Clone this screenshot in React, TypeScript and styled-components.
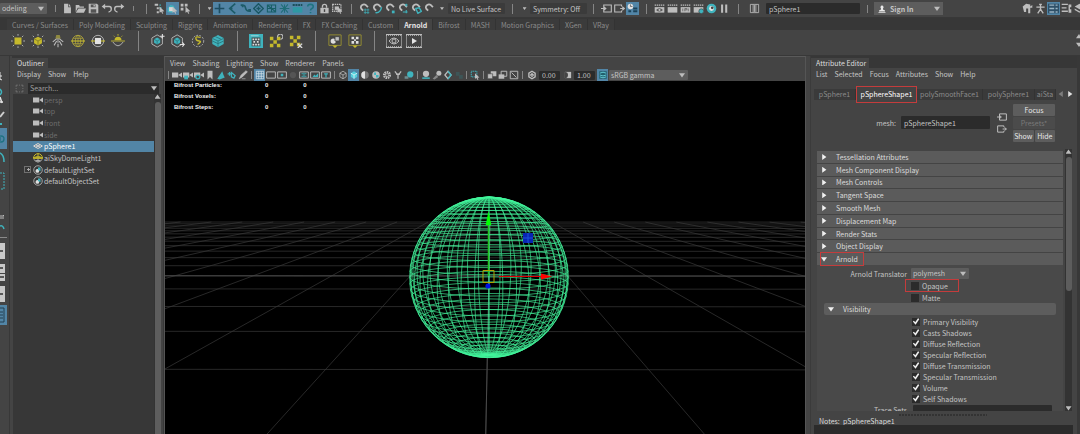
import React from 'react';
import styled, { createGlobalStyle, css } from 'styled-components';

const C = {
  base: '#444444',
  dark: '#373737',
  field: '#2b2b2b',
  control: '#5d5d5d',
  text: '#c4c4c4',
  dim: '#8b8b8b',
  blue: '#5285a6',
  teal: '#3fb3bd',
  yellow: '#c5b92c',
  grey: '#bdbdbd',
  red: '#c43c3c',
  mesh: '#43f59c',
};

const GlobalStyle = createGlobalStyle`
  *, *::before, *::after { box-sizing: border-box; }
  body { margin: 0; background: ${C.base}; }
  body, button, input, select, textarea {
    font-family: "Noto Sans CJK SC", "Noto Sans", sans-serif;
    font-size: 7px;
    line-height: 10px;
    color: ${C.text};
  }
  button, input, select, textarea { margin: 0; padding: 0; border: 0; border-radius: 0; background: none; }
  button { white-space: nowrap; }
`;

/* ---------- icons ---------- */

const magnet = (
  <path d="M3 8 A4.5 4.5 0 0 1 10 3 L13 6 M3 8 L6 11" fill="none" stroke={C.grey} strokeWidth="2.6" />
);
const clap = (
  <>
    <path d="M1 3h14M1 3" stroke={C.grey} strokeWidth="2" strokeDasharray="2 1" />
    <path d="M1 6h14v8H1z" fill={C.grey} />
  </>
);
const camera = <path d="M0 4h10v8H0zM10 8l6-4v8z" fill={C.grey} />;
const rays = (
  <path
    d="M8 0v2M8 14v2M0 8h2M14 8h2M2 2l1.500 1.500M12.500 12.500L14 14M14 2l-1.500 1.500M3.500 12.500L2 14"
    stroke={C.grey}
    strokeWidth="1"
  />
);
const cube = (fill: string, line: string) => (
  <>
    <path d="M8 2l5 3v6l-5 3-5-3V5z" fill={fill} />
    <path d="M3 5l5 3 5-3M8 8v6" fill="none" stroke={line} strokeWidth="1.200" />
  </>
);
const hexCube = (
  <>
    <path d="M7 1l6 3.500v7L7 15l-6-3.500v-7z" fill="none" stroke={C.grey} strokeWidth="1" />
    <path d="M7 4l3.500 2v4L7 12l-3.500-2V6z" fill={C.teal} />
    <path d="M3.500 6L7 8l3.500-2M7 8v4" fill="none" stroke="#2d6b70" strokeWidth="0.800" />
  </>
);
const frame = <path d="M1 3h14v10H1z" fill="none" stroke={C.grey} strokeWidth="1.500" />;
const checker = (color: string) => (
  <path d="M1 1h4v4H1zM9 1h4v4H9zM5 5h4v4H5zM1 9h4v4H1zM9 9h4v4H9z" fill={color} />
);
const pointer = <path d="M8 5l7 7-3 .300 1.500 3-1.500.500-1.500-3L8 14z" fill={C.grey} />;
const yellowFrame = (
  <>
    <path d="M1 1h14v12H1z" fill="none" stroke="#9c9431" strokeWidth="1" />
    <path d="M5 13h6l-3 3z" fill={C.yellow} />
  </>
);
const setIcon = (
  <>
    <circle cx="8" cy="8" r="6.800" fill="none" stroke={C.grey} strokeWidth="1.300" />
    <circle cx="7" cy="9.500" r="3" fill="#e0e0e0" />
    <path d="M8 4h4v6l-4-2z" fill={C.teal} />
  </>
);

const ICONS = {
  file: <path d="M3 1h6v5h4v9H3zM10 1l3 4h-3z" fill={C.grey} />,
  folder: <path d="M1 3h5l1 2h6v2H4l-3 6zM5 8h11l-3 6H1z" fill={C.grey} />,
  save: (
    <>
      <path d="M1 1h12l2 2v12H1z" fill={C.grey} />
      <path d="M4 2h7v4H4zM4 9h8v5H4z" fill="#555" />
      <path d="M8 3h2v2H8z" fill={C.grey} />
    </>
  ),
  undo: <path d="M6 1L1 5l5 4V6h6q2 0 2 3t-3 3v2q5-1 5-5.500T12 4H6z" fill={C.grey} />,
  redo: <path d="M10 1l5 4-5 4V6H4q-2 0-2 3t3 3v2q-5-1-5-5.500T4 4h6z" fill={C.grey} />,
  selHier: (
    <>
      <path d="M1 1h5v3H1zM4 6h3v3H4zM4 12h3v3H4z" fill={C.grey} />
      <path d="M8 3h2M8 7h3" stroke={C.teal} strokeWidth="2" />
      {pointer}
    </>
  ),
  selObj: (
    <>
      <path d="M1 8l4-5 5 1 2 6-5 4-6-1z" fill={C.teal} />
      <path d="M3 6h6v6H3z" fill="#d7d7d7" />
      {pointer}
    </>
  ),
  selComp: (
    <>
      <path d="M1 1h4v4H1zM7 1h4v4H7zM1 7h4v4H1z" fill={C.grey} />
      {pointer}
    </>
  ),
  plus: <path d="M8 1v14M1 8h14" stroke="#1d4d61" strokeWidth="2.400" />,
  snapCurve: <path d="M12 1L4 8l8 7M3 8h5" fill="none" stroke="#1d5b68" strokeWidth="2.400" />,
  snapLine: <path d="M2 4q5-2 6 3t6 5M1 3h3v3M12 10h3v3" fill="none" stroke="#1d5b68" strokeWidth="2.400" />,
  diamond: (
    <path d="M8 1l7 7-7 7-7-7zM5 8h6M8 5v6" fill="none" stroke="#1a5763" strokeWidth="2" />
  ),
  gridSnap: (
    <path d="M2 3h12v10H2zM2 8h12M8 3v10M3 4l10 8" fill="none" stroke="#175f66" strokeWidth="1.500" />
  ),
  burst: <path d="M3 2l10 12M13 2L3 14M1 8h14M8 2v12" stroke="#1f6d78" strokeWidth="1.500" />,
  slate: (
    <>
      <path d="M1 6h14v8H1z" fill="#2f98a4" />
      <path d="M1 3h14" stroke="#1b4f5b" strokeWidth="3" strokeDasharray="3 1" />
    </>
  ),
  help: (
    <path d="M4 5q0-3 4-3t4 3q0 2-2 3t-2 3M8 13v2" fill="none" stroke="#1f7480" strokeWidth="2.400" />
  ),
  lock: (
    <>
      <path d="M2 7h12v8H2z" fill={C.grey} />
      <path d="M5 7V5q0-3 3-3t3 3v2" fill="none" stroke={C.grey} strokeWidth="2" />
      <path d="M7 9h2v4H7z" fill="#444" />
    </>
  ),
  marquee: (
    <>
      <path d="M1 2h12v10H1z" fill="none" stroke={C.grey} strokeWidth="2" strokeDasharray="2 1" />
      <path d="M4 5h6v5H4z" fill={C.grey} />
      {pointer}
    </>
  ),
  magGrid: <>{magnet}<path d="M9 8v8M13 8v8M7 10h8M7 14h8" stroke={C.teal} /></>,
  magCurve: <>{magnet}<path d="M5 14q7 1 9-8" fill="none" stroke={C.teal} strokeWidth="2" /></>,
  magPoint: <>{magnet}<path d="M10 11h4v4h-4z" fill={C.teal} /></>,
  magCenter: <>{magnet}<path d="M12 1v4M10 3h4M7 13h7M12 10v5" stroke={C.teal} strokeWidth="1.600" /></>,
  magPlane: <>{magnet}<path d="M7 8l5-1 3 5-5 3z" fill="none" stroke={C.teal} strokeWidth="2" /></>,
  magnet,
  inBox: <path d="M4 3h11v10H4zM0 8h6M4 5.500L7 8l-3 2.500" fill="none" stroke={C.grey} strokeWidth="1.600" />,
  outBox: <path d="M11 5V3H1v10h10v-2M9 8h6M12 5.500L15 8l-3 2.500" fill="none" stroke={C.grey} strokeWidth="1.600" />,
  history: (
    <>
      <circle cx="5" cy="5" r="4" fill="#e2e2e2" />
      <path d="M5 2v3h3" fill="none" stroke="#444" />
      <path d="M9 8h6M9 12h6M2 12h4" stroke="#1b4258" strokeWidth="3" />
    </>
  ),
  renderEye: <>{clap}<path d="M3 10q5-5 10 0-5 5-10 0" fill="#555" /><circle cx="8" cy="10" r="1.500" fill={C.grey} /></>,
  render: clap,
  renderIpr: <>{clap}<path d="M4 8v4M7 8v4M7 8h3v2H7M12 8v4" stroke="#555" fill="none" /></>,
  renderSet: <>{clap}<circle cx="12" cy="12" r="3.500" fill={C.teal} stroke="#444" /></>,
  hyper: (
    <>
      <circle cx="8" cy="8" r="7" fill={C.teal} />
      <circle cx="8" cy="8" r="3.500" fill="#e6e6e6" />
      <circle cx="9" cy="7" r="2" fill="#444" />
    </>
  ),
  pause: <path d="M3 2h3v12H3zM9 2h3v12H9z" fill={C.grey} />,
  textField: <path d="M2 2h4v12H2zM10 2h4v12h-4zM6 2h4M6 14h4M8 3v10" fill="none" stroke={C.grey} strokeWidth="1.200" />,
  user: (
    <>
      <path d="M8 1a3.500 3.500 0 0 1 2 6v2l4 2v2H2v-2l4-2V7a3.500 3.500 0 0 1 2-6" fill="#e8e8e8" />
      <path d="M1 15h14" stroke="#e8e8e8" strokeWidth="1.500" />
    </>
  ),
  toolA: <path d="M1 5l5-4 6 1v3l3-2v4h-3v8H9V8H6v5H3z" fill={C.grey} />,
  person: <path d="M8 1v4M2 6h12M8 5v5M8 9l-4 6M8 9l4 6M6 2h4" fill="none" stroke={C.grey} strokeWidth="2" />,
  panelA: (
    <>
      <path d="M0 1h16v14H0z" fill="#2e5068" />
      <path d="M2 3h7M11 3h3M2 8h7M11 8h3M2 13h7M11 13h3" stroke="#9ab4c4" strokeWidth="2" />
    </>
  ),
  panelB: <path d="M1 2h9M12 2v12M1 7h7M1 12h9M14 2v4M14 9v5" stroke={C.grey} strokeWidth="2" />,
  layers: <path d="M8 1l7 4-7 4-7-4zM1 8l7 4 7-4v2l-7 4-7-4z" fill={C.grey} />,

  areaLight: <>{rays}<path d="M4 4h8v8H4z" fill={C.yellow} /></>,
  meshLight: <>{rays}<path d="M8 3l4.500 2.500v5L8 13l-4.500-2.500v-5z" fill={C.yellow} /><path d="M3.500 5.500L8 8l4.500-2.500M8 8v5" fill="none" stroke="#6f6a26" strokeWidth="0.800" /></>,
  photometric: (
    <>
      <path d="M8 4v6M7 5l-5 4M9 5l5 4M6.500 8l-3 5M9.500 8l3 5M8 11v4" fill="none" stroke={C.grey} strokeWidth="1.200" />
      <path d="M6 1h4l1 4H5z" fill="#8f8940" />
    </>
  ),
  skydome: (
    <>
      <circle cx="8" cy="8" r="6.500" fill="none" stroke="#b3a83a" />
      <ellipse cx="8" cy="8" rx="3" ry="6.500" fill="none" stroke="#b3a83a" strokeWidth="0.800" />
      <path d="M8 1.500v13M2.500 5h11M2.500 11h11" stroke="#b3a83a" strokeWidth="0.800" />
      <path d="M0 8h16" stroke={C.yellow} strokeWidth="1.300" />
    </>
  ),
  skydomeNode: (
    <>
      <path d="M1 8a7 7 0 0 1 14 0zM4 6h8M8 1v6" fill="none" stroke={C.yellow} strokeWidth="1.600" />
      <path d="M0 8h16" stroke={C.yellow} strokeWidth="2.500" />
      <path d="M1.500 10a7 7 0 0 0 13 0M4 12h8M8 9v6" fill="none" stroke={C.grey} strokeWidth="1.300" />
    </>
  ),
  portal: (
    <>
      <circle cx="8" cy="8" r="6.500" fill="none" stroke={C.grey} />
      <path d="M0 8h16" stroke={C.yellow} strokeWidth="1.300" />
      <path d="M4.500 4.500h7v7h-7z" fill="#e3e3e3" />
    </>
  ),
  physSky: (
    <>
      <path d="M4 7a4 4 0 0 1 8 0z" fill={C.yellow} />
      <path d="M0 8h16M8 0v2M3 2l1 1M13 2l-1 1" stroke={C.yellow} />
      <path d="M2 9q6 9 12 0" fill="none" stroke={C.grey} />
    </>
  ),
  standinNew: <>{hexCube}<path d="M13 0v5M10.500 2.500h5" stroke="#e4e4e4" strokeWidth="1.200" /></>,
  standinOut: <>{hexCube}<path d="M10 12h5l-2-2.500M15 12l-2 2.500" fill="none" stroke="#e4e4e4" strokeWidth="1.200" /></>,
  curveCollector: (
    <>
      <circle cx="8" cy="8" r="6.500" fill="none" stroke={C.grey} strokeDasharray="2 1.500" />
      <path d="M11 4q-6-2-5.500 1t4 3-2 4" fill="none" stroke={C.yellow} strokeWidth="1.500" />
    </>
  ),
  volume: (
    <>
      <path d="M8 1l6.500 3.500v7L8 15l-6.500-3.500v-7z" fill={C.teal} />
      <path d="M1.500 5L8 8l6.500-3M1.500 8L8 11l6.500-3M8 8v7M5 3l6.500 3" fill="none" stroke="#2b757c" />
    </>
  ),
  txWindow: (
    <>
      <path d="M0 0h16v16H0z" fill={C.teal} />
      <path d="M2 2h9" stroke="#a9d9de" />
      <path d="M3 4h10v10H3z" fill="#3e4a4c" />
      <path d="M4 5h2v2H4zM10 5h2v2h-2zM7 5h2v2H7zM5 8h2v2H5zM9 8h2v2H9zM4 11h2v2H4zM10 11h2v2h-2zM7 11h2v2H7z" fill="#ddd" />
    </>
  ),
  txUpdate: <g transform="translate(0 2)">{checker(C.yellow)}<path d="M10 2a3 3 0 1 1 3 2" fill="none" stroke={C.grey} strokeWidth="1.300" /></g>,
  txDelete: <g transform="translate(0 1)">{checker(C.yellow)}<path d="M10 10l5 5M15 10l-5 5" stroke="#d8d8d8" strokeWidth="1.600" /></g>,
  bakeGeo: <>{yellowFrame}<circle cx="6" cy="8" r="3" fill="#ddd" /><path d="M8 3h5v5H8z" fill={C.grey} stroke="#444" /></>,
  bakeTex: <>{yellowFrame}<path d="M4 3h3v3H4zM9 3h3v3H9zM7 6h2v2H7zM4 8h3v3H4zM9 8h3v3H9z" fill="#e0e0e0" /></>,
  renderView: (
    <>
      <path d="M0 1.500h16v13H0z" fill="none" stroke={C.grey} strokeWidth="1.200" />
      <path d="M0 2h16M0 14h16" stroke={C.grey} strokeWidth="1.500" strokeDasharray="1 1" />
      <path d="M3 8q5-6 10 0-5 6-10 0" fill="none" stroke={C.grey} />
      <circle cx="8" cy="8" r="2" fill="none" stroke={C.grey} />
    </>
  ),
  renderPlay: (
    <>
      <path d="M0 1.500h16v13H0z" fill="none" stroke={C.grey} strokeWidth="1.200" />
      <path d="M0 2h16M0 14h16" stroke={C.grey} strokeWidth="1.500" strokeDasharray="1 1" />
      <path d="M6 5l5 3-5 3z" fill="#e4e4e4" />
    </>
  ),

  camera,
  cameraLock: <>{camera}<path d="M2 9h6v6H2z" fill={C.teal} /></>,
  cameraSet: <>{camera}<circle cx="6" cy="11" r="3" fill="#444" stroke={C.teal} strokeWidth="2" /></>,
  bookmark: <path d="M4 1h8v14l-4-4-4 4z" fill={C.grey} />,
  imagePlane: <path d="M2 14l8-12 2 6 2 4-8 3z" fill={C.teal} />,
  panZoom: <path d="M1 6h6M4 3v6M7 4l6 5-2 4-4-2z" fill="none" stroke={C.teal} strokeWidth="2" />,
  pencil: <path d="M2 14l3-6 8-7 2 2-8 8zM6 14h6" fill={C.grey} stroke={C.grey} />,
  grid: <path d="M2 2h12v12H2zM2 6h12M2 10h12M6 2v12M10 2v12" fill="none" stroke="#d7e4ec" strokeWidth="1.200" />,
  frame,
  gate: <>{frame}<path d="M6 6h4v4H6z" fill={C.teal} /></>,
  dot: <circle cx="8" cy="8" r="5" fill="#555" />,
  safeA: <>{frame}<path d="M4 6h3M9 6h3M4 10h3M9 10h3M8 4v8" stroke={C.teal} strokeWidth="1.500" /></>,
  safeB: <>{frame}<path d="M4 11l3-4 2 2 4-4v6z" fill={C.teal} /></>,
  safeT: <>{frame}<path d="M5 6h6M8 6v6" stroke={C.teal} strokeWidth="2" /></>,
  wireCube: <path d="M8 2l5 3v6l-5 3-5-3V5zM3 5l5 3 5-3M8 8v6" fill="none" stroke={C.grey} strokeWidth="1.200" />,
  shadedCube: cube('#54d0dc', '#e8f6f8'),
  halfBall: <><circle cx="8" cy="8" r="6" fill="#777" /><path d="M8 2a6 6 0 0 0 0 12z" fill="#e0e0e0" /></>,
  texBall: <><circle cx="8" cy="8" r="6" fill={C.grey} /><path d="M5 4h3v4H5zM8 8h4v4H8z" fill={C.teal} /></>,
  checkBall: <circle cx="8" cy="8" r="4" fill="none" stroke={C.grey} strokeWidth="5" strokeDasharray="2 1" />,
  bulb: <path d="M8 5v9M3 2l3 4M13 2l-3 4M5 7h6" stroke={C.grey} strokeWidth="2" />,
  shadow: <><circle cx="10" cy="7" r="5" fill={C.teal} /><path d="M1 10h6v4H1z" fill="#6f8d90" /></>,
  ao: <><circle cx="8" cy="6" r="5" fill={C.grey} /><path d="M2 13h12" stroke={C.teal} strokeWidth="2.500" /></>,
  blurBall: <><circle cx="11" cy="5" r="4" fill={C.grey} /><path d="M1 14l6-6 3 3-6 4z" fill="#888" /></>,
  antialias: <><path d="M8 2l5 6-5 6-5-6z" fill="none" stroke={C.grey} strokeWidth="2" /><path d="M8 2l5 6-5 6" fill="none" stroke={C.teal} strokeWidth="2" /></>,
  dof: <path d="M3 3h6v6H3zM8 8h6v6H8z" fill="#3d5557" />,
  isolate: <><path d="M2 2h9v9H2z" fill="none" stroke={C.teal} strokeWidth="1.600" strokeDasharray="2 1" />{pointer}</>,
  xray: <><path d="M6 2h9v8H6z" fill={C.grey} /><path d="M1 6h8v8H1z" fill={C.grey} stroke="#444" /></>,
  xrayJoint: <><path d="M5 2h9v8H5z" fill="none" stroke={C.grey} strokeWidth="1.500" /><path d="M1 7h9v7H1z" fill={C.grey} /></>,
  xrayComp: <><path d="M2 2h12v12H2z" fill="none" stroke={C.grey} strokeWidth="1.500" /><path d="M4 4l8 8" stroke={C.grey} strokeWidth="1.500" /></>,
  aperture: <path d="M8 2l5 3v6l-5 3-5-3V5zM8 6l2 2-2 2-2-2z" fill="none" stroke={C.grey} strokeWidth="2.200" />,
  gamma: <><path d="M3 3h10v10H3z" fill={C.grey} /><path d="M3 3a5 5 0 0 1 0 10z" fill="#444" /></>,
  colorMgmt: <><path d="M2 2h12v12H2z" fill="#22606d" /><path d="M3 5q5-3 10 0M3 8q5 3 10 0M3 11q5 3 10 0" fill="none" stroke="#65cbd6" strokeWidth="1.500" /></>,
  polyMesh: <path d="M1 8l7-4 7 4-7 4zM4.500 6l7 4M11.500 6l-7 4" fill="none" stroke="#e0d6cf" strokeWidth="1.600" />,
  setIcon,
  target: <path d="M2 5V2h3M11 2h3v3M14 11v3h-3M5 14H2v-3M7 2h2M7 14h2M2 7v2M14 7v2" fill="none" stroke="#777" strokeWidth="1.500" />,
};
type IconName = keyof typeof ICONS;

const Glyph = styled.svg<{ $size: number }>`
  display: block;
  flex: none;
  width: ${(p) => p.$size}px;
  height: ${(p) => p.$size}px;
`;
const Icon = ({ name, size }: { name: IconName; size: number }) => (
  <Glyph $size={size} viewBox="0 0 16 16" aria-hidden="true">
    {ICONS[name]}
  </Glyph>
);

const Tri = styled.span<{ $dir: 'up' | 'down' | 'right' | 'left'; $color?: string }>`
  display: block;
  flex: none;
  width: 6px;
  height: 6px;
  background: ${(p) => p.$color || C.grey};
  pointer-events: none;
  clip-path: ${(p) =>
    ({
      up: 'polygon(0 80%, 50% 10%, 100% 80%)',
      down: 'polygon(0 20%, 100% 20%, 50% 90%)',
      right: 'polygon(20% 0, 90% 50%, 20% 100%)',
      left: 'polygon(80% 0, 10% 50%, 80% 100%)',
    })[p.$dir]};
`;

/* ---------- shared controls ---------- */

const ToolButton = styled.button<{ $w: number; $h: number; $on?: boolean }>`
  display: flex;
  flex: none;
  align-items: center;
  justify-content: center;
  width: ${(p) => p.$w}px;
  height: ${(p) => p.$h}px;
  ${(p) => p.$on && css`background: ${C.blue};`}
`;
const Rule = styled.span<{ $w: number; $h: number }>`
  display: flex;
  flex: none;
  justify-content: center;
  width: ${(p) => p.$w}px;
  &::before {
    content: '';
    width: 1px;
    height: ${(p) => p.$h}px;
    background: #858585;
  }
`;
const ArrowSlot = styled.span<{ $w: number }>`
  display: flex;
  flex: none;
  justify-content: center;
  width: ${(p) => p.$w}px;
  ${Tri} { width: 4px; height: 4px; }
`;
const Gap = styled.span<{ $w: number }>`
  flex: none;
  width: ${(p) => p.$w}px;
`;
const SelectWrap = styled.span<{ $w: number; $h: number }>`
  position: relative;
  flex: none;
  display: block;
  width: ${(p) => p.$w}px;
  height: ${(p) => p.$h}px;
  select {
    appearance: none;
    display: block;
    width: 100%;
    height: 100%;
    padding: 0 14px 0 2px;
    background: ${C.control};
    border-radius: 1px;
    line-height: ${(p) => p.$h}px;
  }
  ${Tri} {
    position: absolute;
    right: 3px;
    top: 50%;
    margin-top: -3px;
  }
`;
const Field = styled.input<{ $w: number; $h: number }>`
  flex: none;
  width: ${(p) => p.$w}px;
  height: ${(p) => p.$h}px;
  padding: 0 3px;
  background: ${C.field};
  border-radius: 1px;
`;

const Select = ({ label, value, w, h }: { label: string; value: string; w: number; h: number }) => (
  <SelectWrap $w={w} $h={h}>
    <select aria-label={label} defaultValue={value}>
      <option>{value}</option>
    </select>
    <Tri $dir="down" />
  </SelectWrap>
);

type Tool = IconName | [IconName];
const Tools = ({ items, w, h, size }: { items: Tool[]; w: number; h: number; size: number }) => (
  <>
    {items.map((item) => {
      const on = Array.isArray(item);
      const name = Array.isArray(item) ? item[0] : item;
      return (
        <ToolButton key={name} $w={w} $h={h} $on={on} aria-label={name}>
          <Icon name={name} size={size} />
        </ToolButton>
      );
    })}
  </>
);

/* ---------- status line ---------- */

const StatusBar = styled.header`
  display: flex;
  flex: none;
  align-items: center;
  height: 18px;
  overflow: hidden;
  background: ${C.base};
  border-bottom: 1px solid #383838;
`;
const StatusField = styled.button`
  flex: none;
  width: 57px;
  height: 11px;
  padding: 0 3px;
  background: #3b3b3b;
  border-radius: 1px;
  text-align: left;
`;
const SignIn = styled.button`
  display: flex;
  flex: none;
  align-items: center;
  gap: 4px;
  width: 69px;
  height: 13px;
  padding: 0 3px 0 4px;
  background: ${C.control};
  font-weight: 700;
  ${Tri} { margin-left: auto; }
`;
const RightTools = styled.div`
  display: flex;
  margin-left: auto;
  margin-right: -6px;
`;

const StatusLine = () => {
  const p = { w: 13, h: 13, size: 11 };
  return (
    <StatusBar>
      <Select label="Menu set" value="odeling" w={47} h={11} />
      <Gap $w={4} />
      <Rule $w={9} $h={7} />
      <Gap $w={1} />
      <Tools items={['file', 'folder', 'save', 'undo', 'redo']} {...p} />
      <Rule $w={14} $h={5} />
      <Rule $w={13} $h={10} />
      <Tools items={['selHier', ['selObj'], 'selComp']} {...p} />
      <Rule $w={14} $h={10} />
      <ArrowSlot $w={7}><Tri $dir="down" /></ArrowSlot>
      <Tools
        items={[['plus'], ['snapCurve'], ['snapLine'], ['diamond'], ['gridSnap'], ['burst'], ['slate'], ['help']]}
        {...p}
      />
      <Gap $w={1} />
      <Tools items={['lock', 'marquee']} {...p} />
      <Rule $w={14} $h={10} />
      <Tools items={['magGrid', 'magCurve', 'magPoint', 'magCenter', 'magPlane', 'magnet']} {...p} />
      <ArrowSlot $w={12}><Tri $dir="down" /></ArrowSlot>
      <StatusField>No Live Surface</StatusField>
      <Rule $w={14} $h={10} />
      <ArrowSlot $w={11}><Tri $dir="down" /></ArrowSlot>
      <StatusField>Symmetry: Off</StatusField>
      <Rule $w={13} $h={10} />
      <Tools items={['inBox', 'outBox', ['history']]} {...p} />
      <Rule $w={14} $h={10} />
      <Tools items={['renderEye', 'render', 'renderIpr', 'renderSet', 'hyper', 'pause']} {...p} />
      <Rule $w={14} $h={10} />
      <Gap $w={3} />
      <Tools items={['textField']} {...p} />
      <Gap $w={5} />
      <Field $w={94} $h={11} aria-label="Object name" defaultValue="pSphere1" />
      <Rule $w={14} $h={8} />
      <SignIn>
        <Icon name="user" size={8} />
        Sign In
        <Tri $dir="down" />
      </SignIn>
      <RightTools>
        <Tools items={['toolA', 'person', ['panelA'], 'panelB', 'layers']} {...p} />
      </RightTools>
    </StatusBar>
  );
};

/* ---------- shelf ---------- */

const ShelfTabs = styled.nav`
  display: flex;
  flex: none;
  height: 12px;
  padding: 1px 0 0 7px;
  background: ${C.dark};
`;
const ShelfTab = styled.button<{ $active?: boolean }>`
  height: 11px;
  padding: 0 5px;
  border-right: 1px solid #333;
  background: ${(p) => (p.$active ? C.base : '#3b3b3b')};
  color: ${(p) => (p.$active ? '#e4e4e4' : C.dim)};
  font-weight: ${(p) => (p.$active ? 700 : 400)};
`;
const ShelfBody = styled.div`
  display: flex;
  flex: none;
  align-items: center;
  height: 26px;
  padding: 0 0 4px 8px;
  background: ${C.base};
  border-bottom: 1px solid #383838;
`;
const ShelfScroll = styled.div`
  display: flex;
  flex-direction: column;
  gap: 2px;
  margin-left: auto;
  margin-right: -2px;
`;
const SHELVES = [
  'Curves / Surfaces', 'Poly Modeling', 'Sculpting', 'Rigging', 'Animation', 'Rendering', 'FX',
  'FX Caching', 'Custom', 'Arnold', 'Bifrost', 'MASH', 'Motion Graphics', 'XGen', 'VRay',
];

const Shelf = () => {
  const p = { w: 20, h: 18, size: 14 };
  return (
    <>
      <ShelfTabs>
        {SHELVES.map((s) => (
          <ShelfTab key={s} $active={s === 'Arnold'}>{s}</ShelfTab>
        ))}
      </ShelfTabs>
      <ShelfBody>
        <Tools items={['areaLight', 'meshLight', 'photometric', 'skydome', 'portal', 'physSky']} {...p} />
        <Rule $w={20} $h={20} />
        <Tools items={['standinNew', 'standinOut', 'curveCollector', 'volume']} {...p} />
        <Rule $w={18} $h={20} />
        <Tools items={['txWindow', 'txUpdate', 'txDelete']} {...p} />
        <Rule $w={19} $h={20} />
        <Tools items={['bakeGeo', 'bakeTex']} {...p} />
        <Rule $w={19} $h={20} />
        <Tools items={['renderView', 'renderPlay']} w={20} h={18} size={16} />
        <ShelfScroll>
          <Tri $dir="up" />
          <Tri $dir="down" />
        </ShelfScroll>
      </ShelfBody>
    </>
  );
};

/* ---------- tool box ---------- */

const ToolBox = styled.aside`
  flex: none;
  width: 10px;
  padding-top: 2px;
  overflow: hidden;
  border-right: 1px solid #383838;
`;
const ToolBoxArt = styled.svg`
  display: block;
  width: 9px;
  height: 270px;
`;
const LeftTools = () => (
  <ToolBox aria-label="Tool box">
    <ToolBoxArt viewBox="0 0 9 270">
      <path d="M0 14v8M0 18h2M0 21l2 1" stroke="#e0e0e0" fill="none" />
      <path d="M0 31q3 3 0 6" stroke={C.teal} fill="none" strokeWidth="1.500" />
      <path d="M0 39l2 6M0 44h3" stroke="#e0e0e0" fill="none" strokeWidth="1.500" />
      <path d="M0 59l4-5" stroke="#d0d0d0" strokeWidth="2" />
      <path d="M0 66h2" stroke={C.teal} strokeWidth="2" />
      <path d="M0 70h7v21H0z" fill={C.blue} />
      <path d="M1 78q3 0 3 3t-3 3M0 77v8" stroke="#1f7282" fill="none" strokeWidth="1.300" />
      <path d="M0 95q4 2 4 9" stroke={C.teal} fill="none" strokeWidth="1.500" />
      <path d="M0 115h4v16H0" stroke={C.teal} fill="none" strokeDasharray="2 1" />
      <path d="M0 158h4l-1-1M4 160H0" stroke={C.grey} fill="none" />
      <path d="M0 168q3-1 4 3" stroke={C.teal} fill="none" strokeWidth="1.500" />
      <path d="M0 179.500h7" stroke="#8a8a8a" />
      <path d="M0 185h5v16H0zM0 206h5v9H0zM0 216h5v7H0zM0 228h5v16H0z" fill="#c8c8c8" />
      <path d="M0 193h3M0 210h3M0 219h4M0 236h3" stroke="#333" strokeWidth="1.500" />
      <path d="M0 247h7v20H0z" fill={C.blue} />
      <path d="M0 250h4v14H0M0 254h3M0 257h3M0 260h3" stroke="#233e50" fill="none" />
    </ToolBoxArt>
  </ToolBox>
);

/* ---------- dock panels ---------- */

const Workspace = styled.main`
  display: flex;
  flex: 1;
  min-height: 0;
  background: ${C.base};
`;
const TitleStrip = styled.div`
  display: flex;
  flex: none;
  height: 12px;
  padding-top: 2px;
  background: ${C.dark};
`;
const Title = styled.h2<{ $w: number }>`
  width: ${(p) => p.$w}px;
  margin: 0;
  padding-left: 5px;
  background: ${C.base};
  color: #dedede;
  font-size: 7px;
  line-height: 10px;
  font-weight: 400;
  white-space: nowrap;
`;
const MenuRow = styled.nav<{ $h: number }>`
  display: flex;
  flex: none;
  align-items: center;
  gap: 7px;
  height: ${(p) => p.$h}px;
  padding-left: 5px;
`;
const Menu = ({ items, h }: { items: string[]; h: number }) => (
  <MenuRow $h={h}>
    {items.map((m) => <button key={m}>{m}</button>)}
  </MenuRow>
);
const ScrollTrack = styled.div`
  display: flex;
  flex: none;
  flex-direction: column;
  align-items: center;
  gap: 2px;
  width: 7px;
  background: #333;
`;
const Thumb = styled.div<{ $h?: number }>`
  width: 6px;
  border-radius: 3px 3px ${(p) => (p.$h ? '3px 3px' : '0 0')};
  background: ${C.control};
  ${(p) => (p.$h ? css`height: ${p.$h}px; margin-bottom: auto;` : css`flex: 1;`)}
`;

/* ---------- outliner ---------- */

const OutlinerPanel = styled.section`
  display: flex;
  flex: none;
  flex-direction: column;
  width: 154px;
  padding-left: 2px;
  border-right: 1px solid #383838;
`;
const SearchRow = styled.div`
  display: flex;
  flex: none;
  align-items: center;
  gap: 4px;
  height: 14px;
  padding: 2px 4px 0 3px;
`;
const SearchBox = styled.label`
  display: flex;
  flex: 1;
  align-items: center;
  height: 11px;
  padding: 0 2px;
  background: ${C.field};
  input { flex: 1; min-width: 0; height: 11px; }
  input::placeholder { color: #a0a0a0; opacity: 1; }
`;
const TreeArea = styled.div`
  display: flex;
  flex: 1;
  justify-content: space-between;
  min-height: 0;
  padding: 0 2px 0 1px;
`;
const Tree = styled.ul`
  display: grid;
  flex: 1;
  grid-template-rows: repeat(8, 1fr);
  height: 93px;
  margin: 0;
  padding: 0;
  list-style: none;
`;
const TreeBack = styled.div`
  flex: 1;
  background: ${C.dark};
`;
const Node = styled.li<{ $tone: 'dim' | 'on' | 'normal' }>`
  display: flex;
  align-items: center;
  gap: 1px;
  padding-left: 12px;
  color: ${(p) => ({ dim: '#6e6e6e', on: '#ffffff', normal: C.text })[p.$tone]};
  ${(p) => p.$tone === 'on' && css`background: ${C.blue};`}
`;
const Expander = styled.span<{ $show?: boolean }>`
  display: flex;
  align-items: center;
  justify-content: center;
  width: 5px;
  height: 5px;
  margin-right: 2px;
  ${(p) =>
    p.$show &&
    css`
      outline: 1px solid #707070;
      &::before { content: ''; width: 3px; height: 1px; background: #aaa; }
      &::after { content: ''; width: 1px; height: 3px; margin-left: -2px; background: #aaa; }
    `}
`;
const NODES: { name: string; icon: IconName; tone: 'dim' | 'on' | 'normal'; expand?: boolean }[] = [
  { name: 'persp', icon: 'camera', tone: 'dim' },
  { name: 'top', icon: 'camera', tone: 'dim' },
  { name: 'front', icon: 'camera', tone: 'dim' },
  { name: 'side', icon: 'camera', tone: 'dim' },
  { name: 'pSphere1', icon: 'polyMesh', tone: 'on' },
  { name: 'aiSkyDomeLight1', icon: 'skydomeNode', tone: 'normal' },
  { name: 'defaultLightSet', icon: 'setIcon', tone: 'normal', expand: true },
  { name: 'defaultObjectSet', icon: 'setIcon', tone: 'normal' },
];

const Outliner = () => (
  <OutlinerPanel>
    <TitleStrip><Title $w={36}>Outliner</Title></TitleStrip>
    <Menu items={['Display', 'Show', 'Help']} h={12} />
    <SearchRow>
      <Icon name="target" size={9} />
      <SearchBox>
        <input type="text" placeholder="Search..." aria-label="Search" />
        <Tri $dir="down" />
      </SearchBox>
    </SearchRow>
    <TreeArea>
      <TreeBack>
        <Tree>
          {NODES.map((n) => (
            <Node key={n.name} $tone={n.tone}>
              <Expander $show={n.expand} />
              <Icon name={n.icon} size={10} />
              <span>{n.name}</span>
            </Node>
          ))}
        </Tree>
      </TreeBack>
      <ScrollTrack>
        <Tri $dir="up" />
        <Thumb />
      </ScrollTrack>
    </TreeArea>
  </OutlinerPanel>
);

/* ---------- 3D view ---------- */

const CAM = { cx: 324, horizon: 106, dist: 7.8, focal: 614, height: 1.13, yaw: 0.003 };
const project = (x: number, y: number, z: number) => {
  const rx = x * Math.cos(CAM.yaw) - z * Math.sin(CAM.yaw);
  const rz = x * Math.sin(CAM.yaw) + z * Math.cos(CAM.yaw);
  const s = CAM.focal / (CAM.dist - rz);
  return `${(CAM.cx + rx * s).toFixed(1)} ${(CAM.horizon + (CAM.height - y) * s).toFixed(1)}`;
};
const gridPath = () => {
  const out: string[] = [];
  for (let i = -12; i <= 12; i += 1) {
    out.push(`M${project(i, 0, -12)}L${project(i, 0, 6)}`);
    if (i <= 4) out.push(`M${project(-12, 0, i)}L${project(12, 0, i)}`);
  }
  return out.join('');
};
const spherePath = () => {
  const out: string[] = [];
  const N = 40;
  const at = (lat: number, lon: number) => {
    const r = Math.cos(lat);
    return project(r * Math.sin(lon), Math.sin(lat), r * Math.cos(lon));
  };
  for (let i = 0; i < N; i += 1) {
    const lon = (i / N) * Math.PI * 2;
    const line: string[] = [];
    for (let j = 0; j <= N; j += 1) line.push(at((j / N - 0.5) * Math.PI, lon));
    out.push(`M${line.join('L')}`);
  }
  for (let j = 1; j < N; j += 1) {
    const lat = (j / N - 0.5) * Math.PI;
    const line: string[] = [];
    for (let i = 0; i < N; i += 1) line.push(at(lat, (i / N) * Math.PI * 2));
    out.push(`M${line.join('L')}Z`);
  }
  return out.join('');
};
const GRID = gridPath();
const AXES = `M${project(-12, 0, 0)}L${project(12, 0, 0)}M${project(0, 0, -12)}L${project(0, 0, 6)}`;
const SPHERE = spherePath();

const ViewPanel = styled.section`
  display: flex;
  flex: 1;
  flex-direction: column;
  min-width: 0;
  margin-right: 4px;
  border-top: 1px solid #5a5a5a;
  border-right: 1px solid #555;
  border-left: 1px solid #555;
`;
const ViewTools = styled.div`
  display: flex;
  flex: none;
  align-items: center;
  height: 12px;
  overflow: hidden;
`;
const Stage = styled.div`
  display: grid;
  flex: 1;
  grid-template: minmax(0, 1fr) / minmax(0, 1fr);
  min-height: 0;
  overflow: hidden;
  background: #000;
`;
const Scene = styled.svg`
  grid-area: 1 / 1;
  width: 100%;
  height: 100%;
`;
const Hud = styled.dl`
  z-index: 1;
  display: grid;
  grid-area: 1 / 1;
  grid-template-columns: 91px auto;
  align-content: start;
  justify-content: start;
  row-gap: 3px;
  margin: 0;
  padding: 0 0 0 9px;
  color: #f0f0f0;
  font-family: "Liberation Sans", sans-serif;
  font-size: 6px;
  line-height: 8px;
  font-weight: 700;
  dd { display: flex; gap: 35px; margin: 0; }
`;

const Viewport = () => {
  const p = { w: 11, h: 12, size: 10 };
  return (
    <ViewPanel>
      <Menu items={['View', 'Shading', 'Lighting', 'Show', 'Renderer', 'Panels']} h={12} />
      <ViewTools>
        <Rule $w={6} $h={8} />
        <Tools items={['camera', 'cameraLock', 'cameraSet', 'bookmark', 'imagePlane', 'panZoom', 'pencil']} {...p} />
        <Rule $w={6} $h={8} />
        <Tools items={[['grid'], 'frame', 'gate', 'dot', 'safeA', 'safeB', 'safeT']} {...p} />
        <Rule $w={6} $h={8} />
        <Tools items={['wireCube', ['shadedCube'], 'halfBall', 'texBall', 'checkBall', 'bulb', 'shadow']} {...p} />
        <Rule $w={6} $h={8} />
        <Tools items={['ao', 'blurBall', 'antialias', 'dof']} {...p} />
        <Rule $w={5} $h={8} />
        <Tools items={['isolate']} {...p} />
        <Rule $w={6} $h={8} />
        <Tools items={['xray', 'xrayJoint', 'xrayComp']} {...p} />
        <Rule $w={7} $h={8} />
        <Tools items={['aperture']} {...p} />
        <Gap $w={2} />
        <Field $w={21} $h={9} aria-label="Exposure" defaultValue="0.00" />
        <Gap $w={2} />
        <Tools items={['gamma']} {...p} />
        <Gap $w={1} />
        <Field $w={21} $h={9} aria-label="Gamma" defaultValue="1.00" />
        <Gap $w={2} />
        <Tools items={[['colorMgmt']]} {...p} />
        <Gap $w={1} />
        <Select label="View transform" value="sRGB gamma" w={79} h={10} />
      </ViewTools>
      <Stage>
        <Scene viewBox="0 0 640 353" preserveAspectRatio="xMidYMid slice" role="img" aria-label="Perspective view">
          <path d={GRID} fill="none" stroke="#3a3a3a" strokeWidth="0.700" />
          <path d={AXES} stroke="#4a4a4a" strokeWidth="1" />
          <path d={SPHERE} fill="none" stroke={C.mesh} strokeWidth="0.650" />
          <path d="M323.500 195V144" stroke="#1fc41f" strokeWidth="1.500" />
          <path d="M323.500 130l2.800 14h-5.600z" fill="#00ff00" />
          <path d="M334 195.500h42" stroke="#e00000" strokeWidth="1.200" />
          <path d="M376 192.500l11 3-11 3z" fill="#ff0000" />
          <path d="M358 152h10v10h-10z" fill="#0824b4" />
          <path d="M358 157h10M363 152v10" stroke="#1b55d8" strokeWidth="1" />
          <circle cx="323" cy="205" r="2.600" fill="#0010e8" />
          <path d="M318 189.500h11v12h-11z" fill="none" stroke="#b0a200" />
        </Scene>
        <Hud>
          {['Particles', 'Voxels', 'Steps'].map((k) => (
            <React.Fragment key={k}>
              <dt>Bifrost {k}:</dt>
              <dd><span>0</span><span>0</span></dd>
            </React.Fragment>
          ))}
        </Hud>
      </Stage>
    </ViewPanel>
  );
};

/* ---------- attribute editor ---------- */

const AttrPanel = styled.section`
  display: flex;
  flex: none;
  flex-direction: column;
  width: 270px;
  border-left: 1px solid #3b3b3b;
  border-right: 3px solid #383838;
`;
const NodeTabs = styled.div`
  display: flex;
  flex: none;
  align-items: center;
  height: 18px;
  margin: 5px 0 0 3px;
`;
const NodeTab = styled.button<{ $w: number; $active?: boolean }>`
  flex: none;
  width: ${(p) => p.$w}px;
  height: 11px;
  overflow: hidden;
  border-right: 1px solid #333;
  background: #3a3a3a;
  color: ${C.dim};
  ${(p) =>
    p.$active &&
    css`
      height: 17px;
      border: 1px solid ${C.red};
      background: ${C.base};
      color: #ffffff;
    `}
`;
const TabArrows = styled.span`
  display: flex;
  gap: 3px;
  margin-left: 2px;
`;
const NodeHeader = styled.div`
  display: grid;
  flex: none;
  grid-template-columns: 89px 89px 21px 42px;
  column-gap: 1px;
  align-items: center;
  height: 39px;
  margin-bottom: 7px;
  label { padding-right: 4px; text-align: right; }
`;
const IoIcons = styled.div`
  display: flex;
  flex-direction: column;
  align-items: center;
  gap: 2px;
`;
const ButtonGrid = styled.div`
  display: grid;
  grid-template-columns: 1fr 1fr;
  grid-auto-rows: 12px;
  gap: 1px;
`;
const Push = styled.button<{ $wide?: boolean }>`
  background: ${C.control};
  color: #e8e8e8;
  border-radius: 1px;
  ${(p) => p.$wide && css`grid-column: 1 / -1;`}
  &:disabled { background: #4b4b4b; color: #7a7a7a; }
`;
const AttrScroll = styled.div`
  display: flex;
  flex: 1;
  min-height: 0;
  margin: 0 5px 0 6px;
`;
const AttrBody = styled.div`
  flex: 1;
  margin-right: 2px;
  padding-top: 2px;
  overflow: hidden;
`;
const Sections = styled.div`
  display: grid;
  grid-template-rows: repeat(9, 1fr);
  gap: 1px;
  height: 114px;
`;
const SectionButton = styled.button<{ $marked?: boolean }>`
  display: flex;
  align-items: center;
  gap: 9px;
  padding-left: 4px;
  background: #5b5b5b;
  color: #dcdcdc;
  ${(p) =>
    p.$marked &&
    css`
      position: relative;
      z-index: 1;
      &::after {
        content: '';
        position: absolute;
        left: 3px;
        top: -1px;
        width: 44px;
        height: 14px;
        border: 1px solid ${C.red};
      }
    `}
`;
const SectionContent = styled.div`
  padding: 3px 0 0 7px;
  background: #494949;
`;
const Row = styled.div`
  display: grid;
  grid-template-columns: 83px 1fr;
  column-gap: 4px;
  align-items: center;
  height: 11px;
  > label:first-child { text-align: right; }
`;
const Mark = styled.div`
  display: flex;
  width: 54px;
  height: 13px;
  margin-left: 81px;
  padding-left: 5px;
  border: 1px solid ${C.red};
`;
const Plain = styled.div`
  display: flex;
  height: 10px;
  margin: 0 0 1px 81px;
  padding-left: 6px;
`;
const CheckLabel = styled.label`
  display: flex;
  align-items: center;
  gap: 3px;
  height: 11px;
  white-space: nowrap;
  input {
    appearance: none;
    width: 8px;
    height: 8px;
    background: ${C.field};
  }
  input:checked::before {
    content: '';
    display: block;
    width: 8px;
    height: 8px;
    background: #f0f0f0;
    clip-path: polygon(10% 50%, 25% 40%, 40% 60%, 75% 10%, 92% 20%, 45% 90%);
  }
`;
const SubHeader = styled.button`
  display: flex;
  align-items: center;
  gap: 9px;
  width: calc(100% - 7px);
  height: 12px;
  margin-bottom: 1px;
  padding-left: 4px;
  border-radius: 2px;
  background: ${C.control};
  color: #dcdcdc;
`;
const Checks = styled.div`
  padding-left: 88px;
`;
const TraceRow = styled(Row)`
  input { width: calc(100% - 13px); margin-left: 2px; }
`;
const Grip = styled.div`
  flex: none;
  width: 88px;
  height: 7px;
  margin: 0 0 0 88px;
  background: repeating-linear-gradient(90deg, #333 0 2px, ${C.base} 2px 3px) 0 3px / 100% 2px no-repeat;
`;
const Notes = styled.label`
  display: flex;
  flex: none;
  flex-direction: column;
  padding: 0 4px 0 3px;
  span { padding-left: 5px; height: 7px; line-height: 6px; color: #dcdcdc; white-space: pre; }
  textarea { height: 9px; resize: none; background: ${C.field}; }
`;

const SECTIONS = [
  'Tessellation Attributes', 'Mesh Component Display', 'Mesh Controls', 'Tangent Space', 'Smooth Mesh',
  'Displacement Map', 'Render Stats', 'Object Display', 'Arnold',
];
const VISIBILITY = [
  'Primary Visibility', 'Casts Shadows', 'Diffuse Reflection', 'Specular Reflection',
  'Diffuse Transmission', 'Specular Transmission', 'Volume', 'Self Shadows',
];

const Check = ({ label, on }: { label: string; on?: boolean }) => (
  <CheckLabel>
    <input type="checkbox" defaultChecked={on} />
    {label}
  </CheckLabel>
);

const AttributeEditor = () => (
  <AttrPanel>
    <TitleStrip><Title $w={58}>Attribute Editor</Title></TitleStrip>
    <Menu items={['List', 'Selected', 'Focus', 'Attributes', 'Show', 'Help']} h={12} />
    <NodeTabs>
      <NodeTab $w={42}>pSphere1</NodeTab>
      <NodeTab $w={61} $active>pSphereShape1</NodeTab>
      <NodeTab $w={66}>polySmoothFace1</NodeTab>
      <NodeTab $w={52}>polySphere1</NodeTab>
      <NodeTab $w={21}>aiSta</NodeTab>
      <TabArrows>
        <Tri $dir="left" $color="#7d7d7d" />
        <Tri $dir="right" $color="#e0e0e0" />
      </TabArrows>
    </NodeTabs>
    <NodeHeader>
      <label htmlFor="mesh">mesh:</label>
      <Field id="mesh" $w={89} $h={13} defaultValue="pSphereShape1" />
      <IoIcons>
        <Icon name="inBox" size={10} />
        <Icon name="outBox" size={10} />
      </IoIcons>
      <ButtonGrid>
        <Push $wide>Focus</Push>
        <Push $wide disabled>Presets*</Push>
        <Push>Show</Push>
        <Push>Hide</Push>
      </ButtonGrid>
    </NodeHeader>
    <AttrScroll>
      <AttrBody>
        <Sections>
          {SECTIONS.map((s) => (
            <SectionButton key={s} $marked={s === 'Arnold'}>
              <Tri $dir={s === 'Arnold' ? 'down' : 'right'} $color="#f0f0f0" />
              <span>{s}</span>
            </SectionButton>
          ))}
        </Sections>
        <SectionContent>
          <Row>
            <label htmlFor="translator">Arnold Translator</label>
            <SelectWrap $w={58} $h={11}>
              <select id="translator" defaultValue="polymesh"><option>polymesh</option></select>
              <Tri $dir="down" />
            </SelectWrap>
          </Row>
          <Mark><Check label="Opaque" /></Mark>
          <Plain><Check label="Matte" /></Plain>
          <SubHeader>
            <Tri $dir="down" $color="#f0f0f0" />
            Visibility
          </SubHeader>
          <Checks>
            {VISIBILITY.map((v) => <Check key={v} label={v} on />)}
          </Checks>
          <TraceRow>
            <label htmlFor="trace">Trace Sets</label>
            <Field id="trace" $w={137} $h={10} />
          </TraceRow>
        </SectionContent>
      </AttrBody>
      <ScrollTrack>
        <Tri $dir="up" />
        <Thumb $h={134} />
        <Tri $dir="down" />
      </ScrollTrack>
    </AttrScroll>
    <Grip />
    <Notes>
      <span>Notes:  pSphereShape1</span>
      <textarea aria-label="Notes" />
    </Notes>
  </AttrPanel>
);

const Page = styled.div`
  display: flex;
  flex-direction: column;
  height: 100vh;
  overflow: hidden;
`;

export default function App() {
  return (
    <Page>
      <GlobalStyle />
      <StatusLine />
      <Shelf />
      <Workspace>
        <LeftTools />
        <Outliner />
        <Viewport />
        <AttributeEditor />
      </Workspace>
    </Page>
  );
}
